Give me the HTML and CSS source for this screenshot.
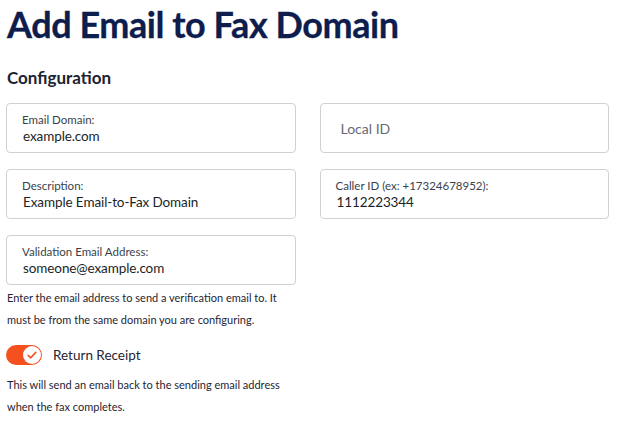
FILE: index.html
```html
<!DOCTYPE html>
<html>
<head>
<meta charset="utf-8">
<link rel="stylesheet" href="styles.css">
</head>
<body>
<div class="page">
  <h1 class="title">Add Email to Fax Domain</h1>
  <h2 class="section">Configuration</h2>
  <div class="grid">
    <div class="field">
      <div class="box"><span class="label">Email Domain:</span><span class="value">example.com</span></div>
    </div>
    <div class="field">
      <div class="box empty"><span class="placeholder">Local ID</span></div>
    </div>
    <div class="field">
      <div class="box"><span class="label">Description:</span><span class="value">Example Email-to-Fax Domain</span></div>
    </div>
    <div class="field">
      <div class="box"><span class="label">Caller ID (ex: +17324678952):</span><span class="value">1112223344</span></div>
    </div>
    <div class="field">
      <div class="box"><span class="label">Validation Email Address:</span><span class="value">someone@example.com</span></div>
      <p class="help">Enter the email address to send a verification email to. It must be from the same domain you are configuring.</p>
    </div>
  </div>
  <div class="toggle-row">
    <span class="toggle">
      <span class="knob">
        <svg width="12" height="12" viewBox="0 0 12 12"><path d="M2.2 6.3 L4.8 8.8 L9.8 3.4" fill="none" stroke="#f4511e" stroke-width="1.6" stroke-linecap="round" stroke-linejoin="round"/></svg>
      </span>
    </span>
    <span class="toggle-label">Return Receipt</span>
  </div>
  <p class="help narrow">This will send an email back to the sending email address when the fax completes.</p>
</div>
</body>
</html>
```
FILE: styles.css
```css
* { box-sizing: border-box; }
body {
  margin: 0;
  background: #fff;
  font-family: Lato, "Open Sans", sans-serif;
  color: #1f2533;
}
.page {
  padding: 0 9px 0 6px;
}
.title {
  margin: 0;
  padding-top: 4px;
  padding-left: 1px;
  font-size: 36px;
  line-height: 40px;
  font-weight: 700;
  color: #0d1d4d;
  letter-spacing: -0.45px;
  -webkit-text-stroke: 0.3px #0d1d4d;
}
.section {
  margin: 23px 0 0 0;
  padding-left: 1px;
  font-size: 17px;
  line-height: 22px;
  font-weight: 700;
  color: #1c2230;
}
.grid {
  margin-top: 14px;
  display: grid;
  grid-template-columns: 1fr 1fr;
  column-gap: 24px;
  row-gap: 16px;
  align-items: start;
}
.box {
  height: 50px;
  border: 1px solid #cfd1d6;
  border-radius: 4px;
  padding: 8px 15px 0 15px;
  display: flex;
  flex-direction: column;
}
.label {
  font-size: 11.5px;
  line-height: 16px;
  color: #3a3f4a;
}
.value {
  font-size: 13.5px;
  line-height: 17px;
  letter-spacing: -0.1px;
  color: #1b1f28;
  padding-left: 1px;
}
.box.empty {
  justify-content: center;
  padding: 0 20px;
}
.placeholder {
  font-size: 14px;
  color: #666a72;
}
.help {
  margin: 2px 0 0 0;
  padding-left: 1px;
  font-size: 11px;
  line-height: 22px;
  color: #1f2533;
}
.toggle-row {
  margin-top: 14px;
  display: flex;
  align-items: center;
  gap: 11px;
  height: 20px;
}
.toggle {
  width: 36px;
  height: 20px;
  border-radius: 10px;
  background: #f4511e;
  display: flex;
  align-items: center;
  justify-content: flex-end;
  padding-right: 1px;
}
.knob {
  width: 18px;
  height: 18px;
  border-radius: 50%;
  background: #fff;
  display: flex;
  align-items: center;
  justify-content: center;
}
.toggle-label {
  font-size: 13.5px;
  color: #1f2533;
}
.narrow {
  margin-top: 9px;
  width: 290px;
}
```
